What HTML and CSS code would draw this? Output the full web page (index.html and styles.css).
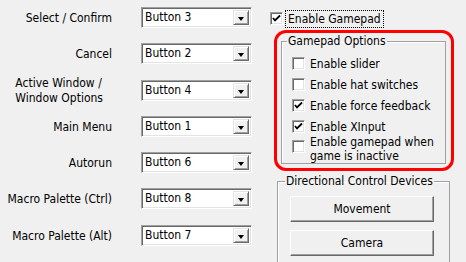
FILE: index.html
```html
<!DOCTYPE html>
<html lang="en">

<head>
  <meta charset="UTF-8">
  <meta name="viewport" content="width=device-width, initial-scale=1.0">
  <title>Gamepad Settings</title>

  <link rel="stylesheet" href="styles.css">

</head>

<body>

  <div class="page">

    <!-- button mapping -->
    <div class="mapping">
      <div class="label">Select / Confirm</div>
      <div class="combo"><span class="value">Button 3</span><span class="drop"></span></div>

      <div class="label">Cancel</div>
      <div class="combo"><span class="value">Button 2</span><span class="drop"></span></div>

      <div class="label multi">Active Window /<br>Window Options</div>
      <div class="combo"><span class="value">Button 4</span><span class="drop"></span></div>

      <div class="label">Main Menu</div>
      <div class="combo"><span class="value">Button 1</span><span class="drop"></span></div>

      <div class="label">Autorun</div>
      <div class="combo"><span class="value">Button 6</span><span class="drop"></span></div>

      <div class="label">Macro Palette (Ctrl)</div>
      <div class="combo"><span class="value">Button 8</span><span class="drop"></span></div>

      <div class="label">Macro Palette (Alt)</div>
      <div class="combo"><span class="value">Button 7</span><span class="drop"></span></div>
    </div>

    <!-- gamepad options -->
    <div class="options">
      <div class="check main">
        <span class="box checked"><svg viewBox="0 0 11 11"><polyline points="2,5 4,7.5 9,2.5" /></svg></span>
        <span class="focus">Enable Gamepad</span>
      </div>

      <div class="marked">
        <fieldset class="group pad">
          <legend>Gamepad Options</legend>
          <div class="check">
            <span class="box"></span>
            <span>Enable slider</span>
          </div>
          <div class="check">
            <span class="box"></span>
            <span>Enable hat switches</span>
          </div>
          <div class="check">
            <span class="box checked"><svg viewBox="0 0 11 11"><polyline points="2,5 4,7.5 9,2.5" /></svg></span>
            <span>Enable force feedback</span>
          </div>
          <div class="check">
            <span class="box checked"><svg viewBox="0 0 11 11"><polyline points="2,5 4,7.5 9,2.5" /></svg></span>
            <span>Enable XInput</span>
          </div>
          <div class="check two">
            <span class="box"></span>
            <span>Enable gamepad when<br>game is inactive</span>
          </div>
        </fieldset>
      </div>

      <fieldset class="group dir">
        <legend>Directional Control Devices</legend>
        <div class="btn">Movement</div>
        <div class="btn">Camera</div>
      </fieldset>
    </div>

  </div>

</body>

</html>
```

FILE: styles.css
```css
body {
  margin: 0;
  background: #f0f0f0;
  font-family: "DejaVu Sans Condensed", "DejaVu Sans", sans-serif;
  font-stretch: condensed;
  font-size: 12px;
  color: #000;
  overflow: hidden;
}

.page {
  display: flex;
  width: 466px;
  height: 262px;
  overflow: hidden;
}

/* left column */
.mapping {
  width: 262px;
  padding-top: 7px;
  display: grid;
  grid-template-columns: 112px 111px;
  grid-auto-rows: 21px;
  column-gap: 29px;
  row-gap: 15.3px;
}

.label {
  text-align: right;
  align-self: center;
  white-space: nowrap;
  margin-top: 1px;
}

.label.multi {
  justify-self: end;
  text-align: left;
  line-height: 15px;
  margin-right: 9px;
}

.combo {
  display: flex;
  box-sizing: border-box;
  border: 1px solid;
  border-color: #a0a0a0 #fff #fff #a0a0a0;
  box-shadow: inset 1px 1px #696969, inset -1px -1px #e3e3e3;
  background: #fff;
  padding: 2px;
}

.combo .value {
  flex: 1;
  line-height: 15px;
  padding-left: 1px;
}

.combo .drop {
  width: 16px;
  box-sizing: border-box;
  background: #f0f0f0;
  border: 1px solid;
  border-color: #e3e3e3 #696969 #696969 #e3e3e3;
  box-shadow: inset 1px 1px #fff, inset -1px -1px #a0a0a0;
  position: relative;
}

.combo .drop::after {
  content: '';
  position: absolute;
  left: 4px;
  top: 6px;
  border-left: 3.5px solid transparent;
  border-right: 3.5px solid transparent;
  border-top: 4px solid #000;
}

/* right column */
.options {
  padding-left: 8px;
  padding-top: 10px;
}

.check {
  display: flex;
  align-items: center;
  height: 21px;
}

.check.main {
  height: 17px;
}

.box {
  width: 13px;
  height: 13px;
  box-sizing: border-box;
  border: 1px solid;
  border-color: #a0a0a0 #fff #fff #a0a0a0;
  box-shadow: inset 1px 1px #696969, inset -1px -1px #e3e3e3;
  background: #fff;
  margin-right: 5px;
  flex: none;
}

.box svg {
  display: block;
  width: 11px;
  height: 11px;
}

.box polyline {
  fill: none;
  stroke: #000;
  stroke-width: 1.8;
}

.focus {
  outline: 1px dotted #000;
  padding: 1px 2px;
  margin-left: -2px;
}

.marked {
  margin-top: 3px;
  margin-left: 4px;
  width: 180px;
  box-sizing: border-box;
  border: 3px solid #f00;
  border-radius: 12px;
  padding: 1px 5px 4px 4px;
}

.group {
  margin: 0;
  border: 1px solid #a0a0a0;
  box-shadow: inset 1px 1px #fff;
  padding: 0 10px;
}

.group legend {
  padding: 0 1px;
  margin-left: -5px;
  line-height: 15px;
}

.pad .check:first-of-type {
  margin-top: 4px;
}

.pad .check.two {
  align-items: flex-start;
  height: auto;
  line-height: 14px;
  margin-top: -2px;
}

.pad .check.two .box {
  margin-top: 5px;
}

.dir {
  margin-top: 3px;
  width: 173px;
  box-sizing: border-box;
  margin-left: 7px;
  padding: 0 12px 20px;
}

.btn {
  margin-top: 7px;
  width: 144px;
  height: 26px;
  box-sizing: border-box;
  border: 1px solid;
  border-color: #fff #696969 #696969 #fff;
  box-shadow: inset -1px -1px #a0a0a0;
  background: #f0f0f0;
  text-align: center;
  line-height: 24px;
}

.btn + .btn {
  margin-top: 8px;
}
```
